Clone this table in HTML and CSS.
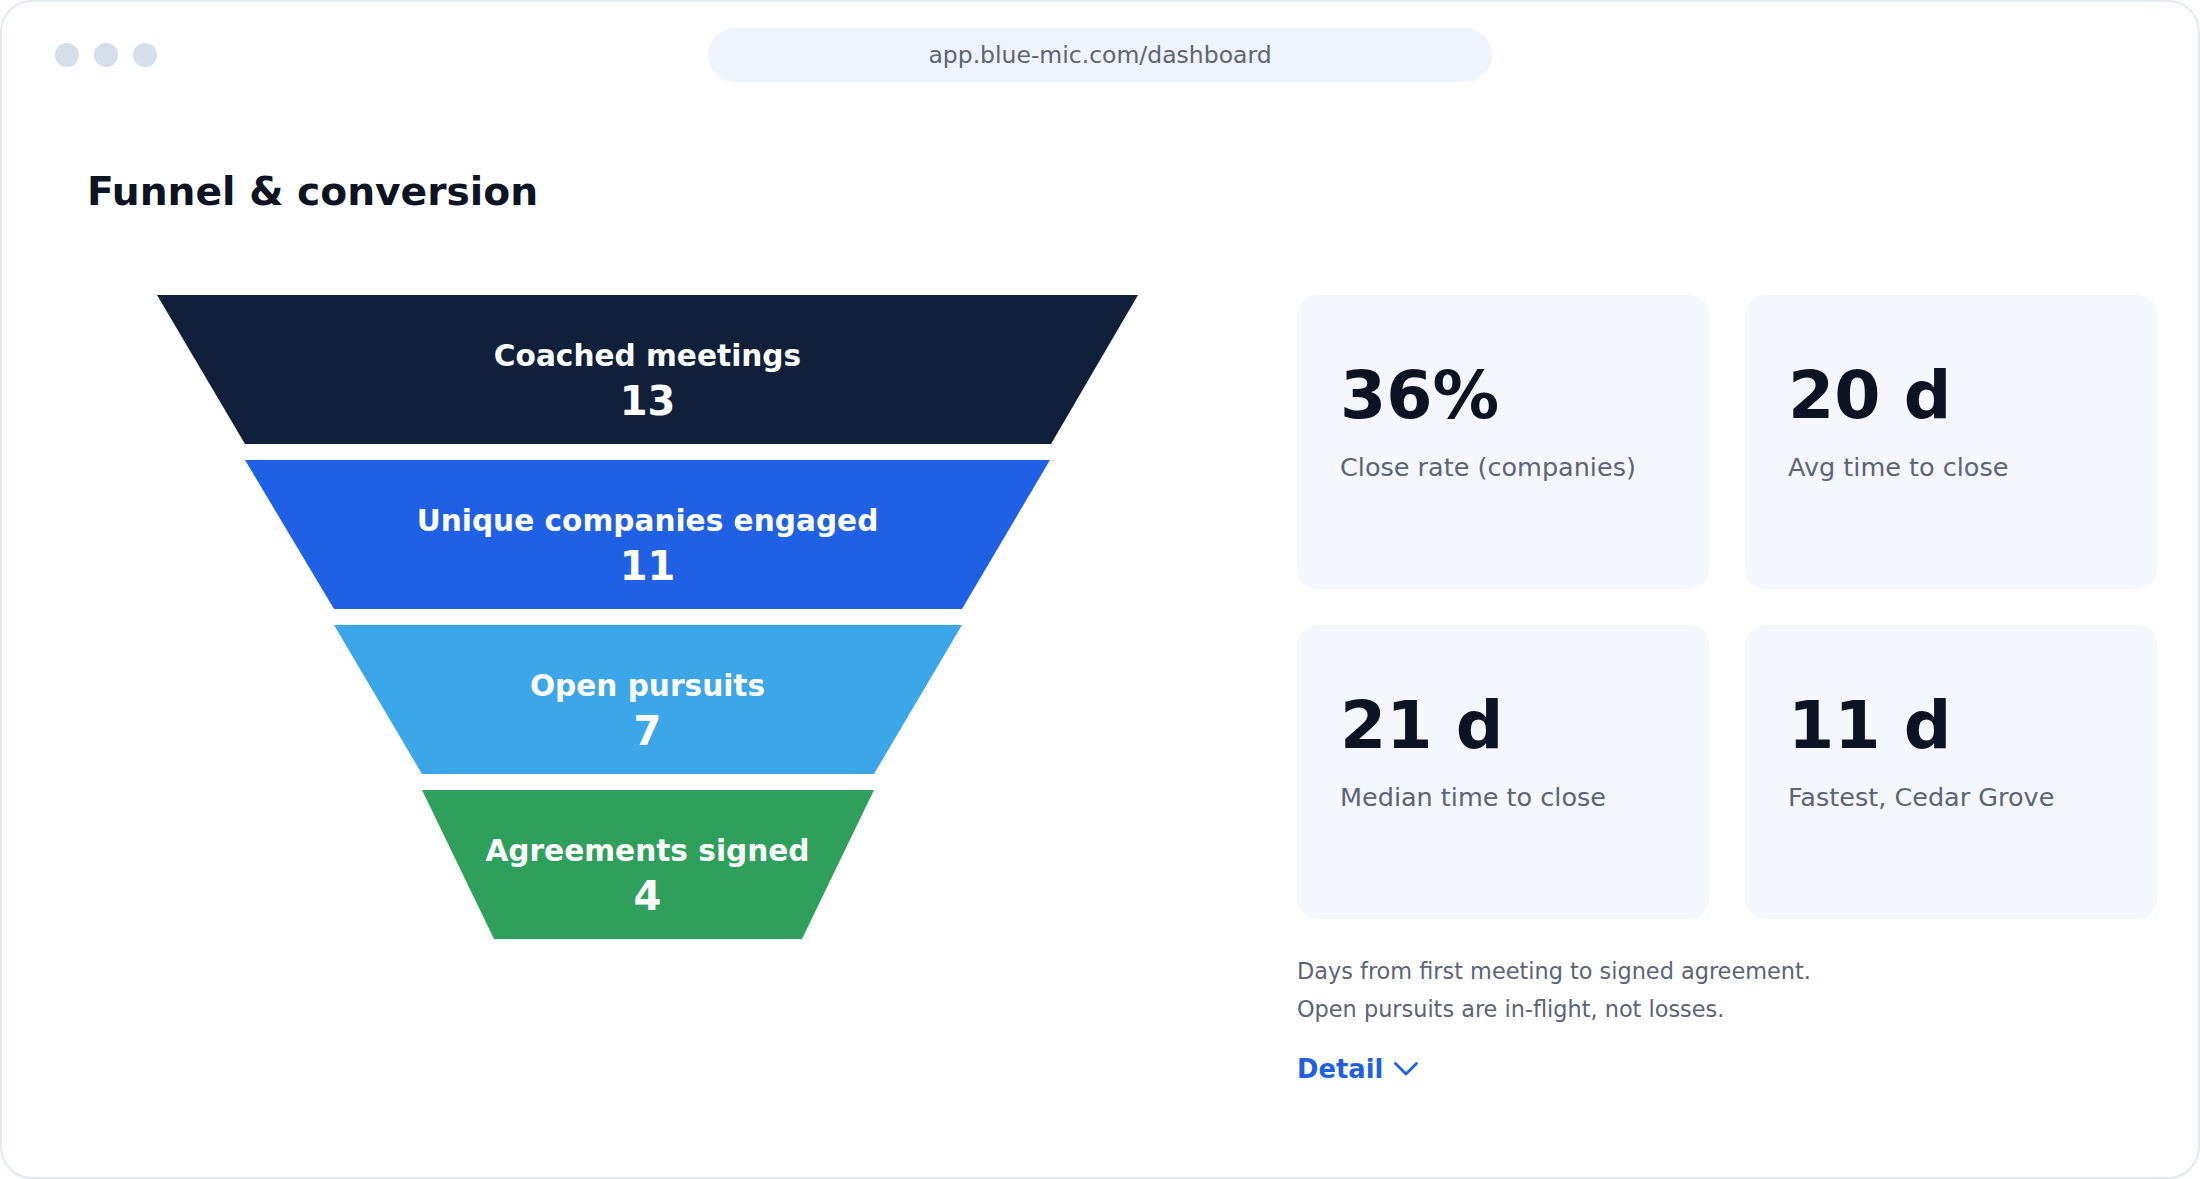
FILE: index.html
```html
<!DOCTYPE html>
<html lang="en">
<head>
<meta charset="utf-8">
<title>Funnel &amp; conversion</title>
<link rel="stylesheet" href="styles.css">
</head>
<body>
<div class="frame">
  <header class="topbar">
    <div class="dots"><span class="dot"></span><span class="dot"></span><span class="dot"></span></div>
    <div class="url">app.blue-mic.com/dashboard</div>
    <div></div>
  </header>
  <h1 class="title">Funnel &amp; conversion</h1>
  <main class="main">
    <div class="funnel">
      <div class="stage s1"><div class="stage-label">Coached meetings</div><div class="stage-num">13</div></div>
      <div class="stage s2"><div class="stage-label">Unique companies engaged</div><div class="stage-num">11</div></div>
      <div class="stage s3"><div class="stage-label">Open pursuits</div><div class="stage-num">7</div></div>
      <div class="stage s4"><div class="stage-label">Agreements signed</div><div class="stage-num">4</div></div>
    </div>
    <section class="side">
      <div class="cards">
        <div class="card"><div class="value">36%</div><div class="label">Close rate (companies)</div></div>
        <div class="card"><div class="value">20 d</div><div class="label">Avg time to close</div></div>
        <div class="card"><div class="value">21 d</div><div class="label">Median time to close</div></div>
        <div class="card"><div class="value">11 d</div><div class="label">Fastest, Cedar Grove</div></div>
      </div>
      <p class="note">Days from first meeting to signed agreement.<br>Open pursuits are in-flight, not losses.</p>
      <a class="detail" href="#">Detail
        <svg class="chev" width="24" height="14" viewBox="0 0 24 14" aria-hidden="true"><polyline points="1.5,1.5 12,12 22.5,1.5" fill="none" stroke="#1f5fe3" stroke-width="2.8" stroke-linecap="round" stroke-linejoin="round"/></svg>
      </a>
    </section>
  </main>
</div>
</body>
</html>
```

FILE: styles.css
```css
* { box-sizing: border-box; }
html, body { margin: 0; padding: 0; background: #ffffff; }
body { font-family: "DejaVu Sans", Verdana, sans-serif; }

.frame {
  width: 2200px;
  height: 1179px;
  border: 2px solid #e4e9f1;
  border-radius: 32px;
  background: #ffffff;
  overflow: hidden;
}

.topbar {
  display: grid;
  grid-template-columns: 1fr 784px 1fr;
  align-items: center;
  padding: 26px 53px 0;
}
.dots { display: flex; gap: 15px; }
.dot { width: 24px; height: 24px; border-radius: 50%; background: #d6dee9; }
.url {
  height: 54px;
  line-height: 54px;
  border-radius: 27px;
  background: #eff3fb;
  color: #5b6478;
  font-size: 23.5px;
  text-align: center;
}

.title {
  margin: 86px 0 0 85px;
  font-size: 39.2px;
  line-height: 48px;
  font-weight: 700;
  color: #0c1322;
}

.main {
  display: grid;
  grid-template-columns: 981px 860px;
  column-gap: 159px;
  align-items: start;
  margin-top: 79px;
  padding-left: 155px;
}

.funnel { display: flex; flex-direction: column; gap: 16px; }
.stage {
  height: 149px;
  padding-top: 44px;
  text-align: center;
  color: #ffffff;
  font-weight: 700;
}
.s1 { background: #10203a; clip-path: polygon(0 0, 981px 0, 894px 149px, 88px 149px); }
.s2 { background: #2060e4; clip-path: polygon(88px 0, 893px 0, 805px 149px, 177px 149px); }
.s3 { background: #3ba6e8; clip-path: polygon(177px 0, 805px 0, 717px 149px, 265px 149px); }
.s4 { background: #2ea05c; clip-path: polygon(265px 0, 717px 0, 645px 149px, 337px 149px); }
.stage-label { font-size: 29.6px; line-height: 35px; }
.stage-num { font-size: 40px; line-height: 47px; margin-top: 4px; }

.cards {
  display: grid;
  grid-template-columns: 1fr 1fr;
  grid-auto-rows: 294px;
  gap: 36px;
}
.card {
  background: #f4f7fc;
  border-radius: 20px;
  padding: 59px 43px 0;
}
.value {
  font-size: 66.5px;
  line-height: 82px;
  font-weight: 700;
  color: #0c1322;
}
.label {
  margin-top: 14px;
  font-size: 25.5px;
  line-height: 35px;
  color: #5b6478;
}

.note {
  margin: 33px 0 0;
  font-size: 22.4px;
  line-height: 38px;
  color: #5b6478;
}
.detail {
  display: inline-flex;
  align-items: center;
  gap: 11px;
  margin-top: 26px;
  font-size: 25.8px;
  line-height: 30px;
  font-weight: 700;
  color: #1f5fe3;
  text-decoration: none;
}
.chev { display: block; }
```
